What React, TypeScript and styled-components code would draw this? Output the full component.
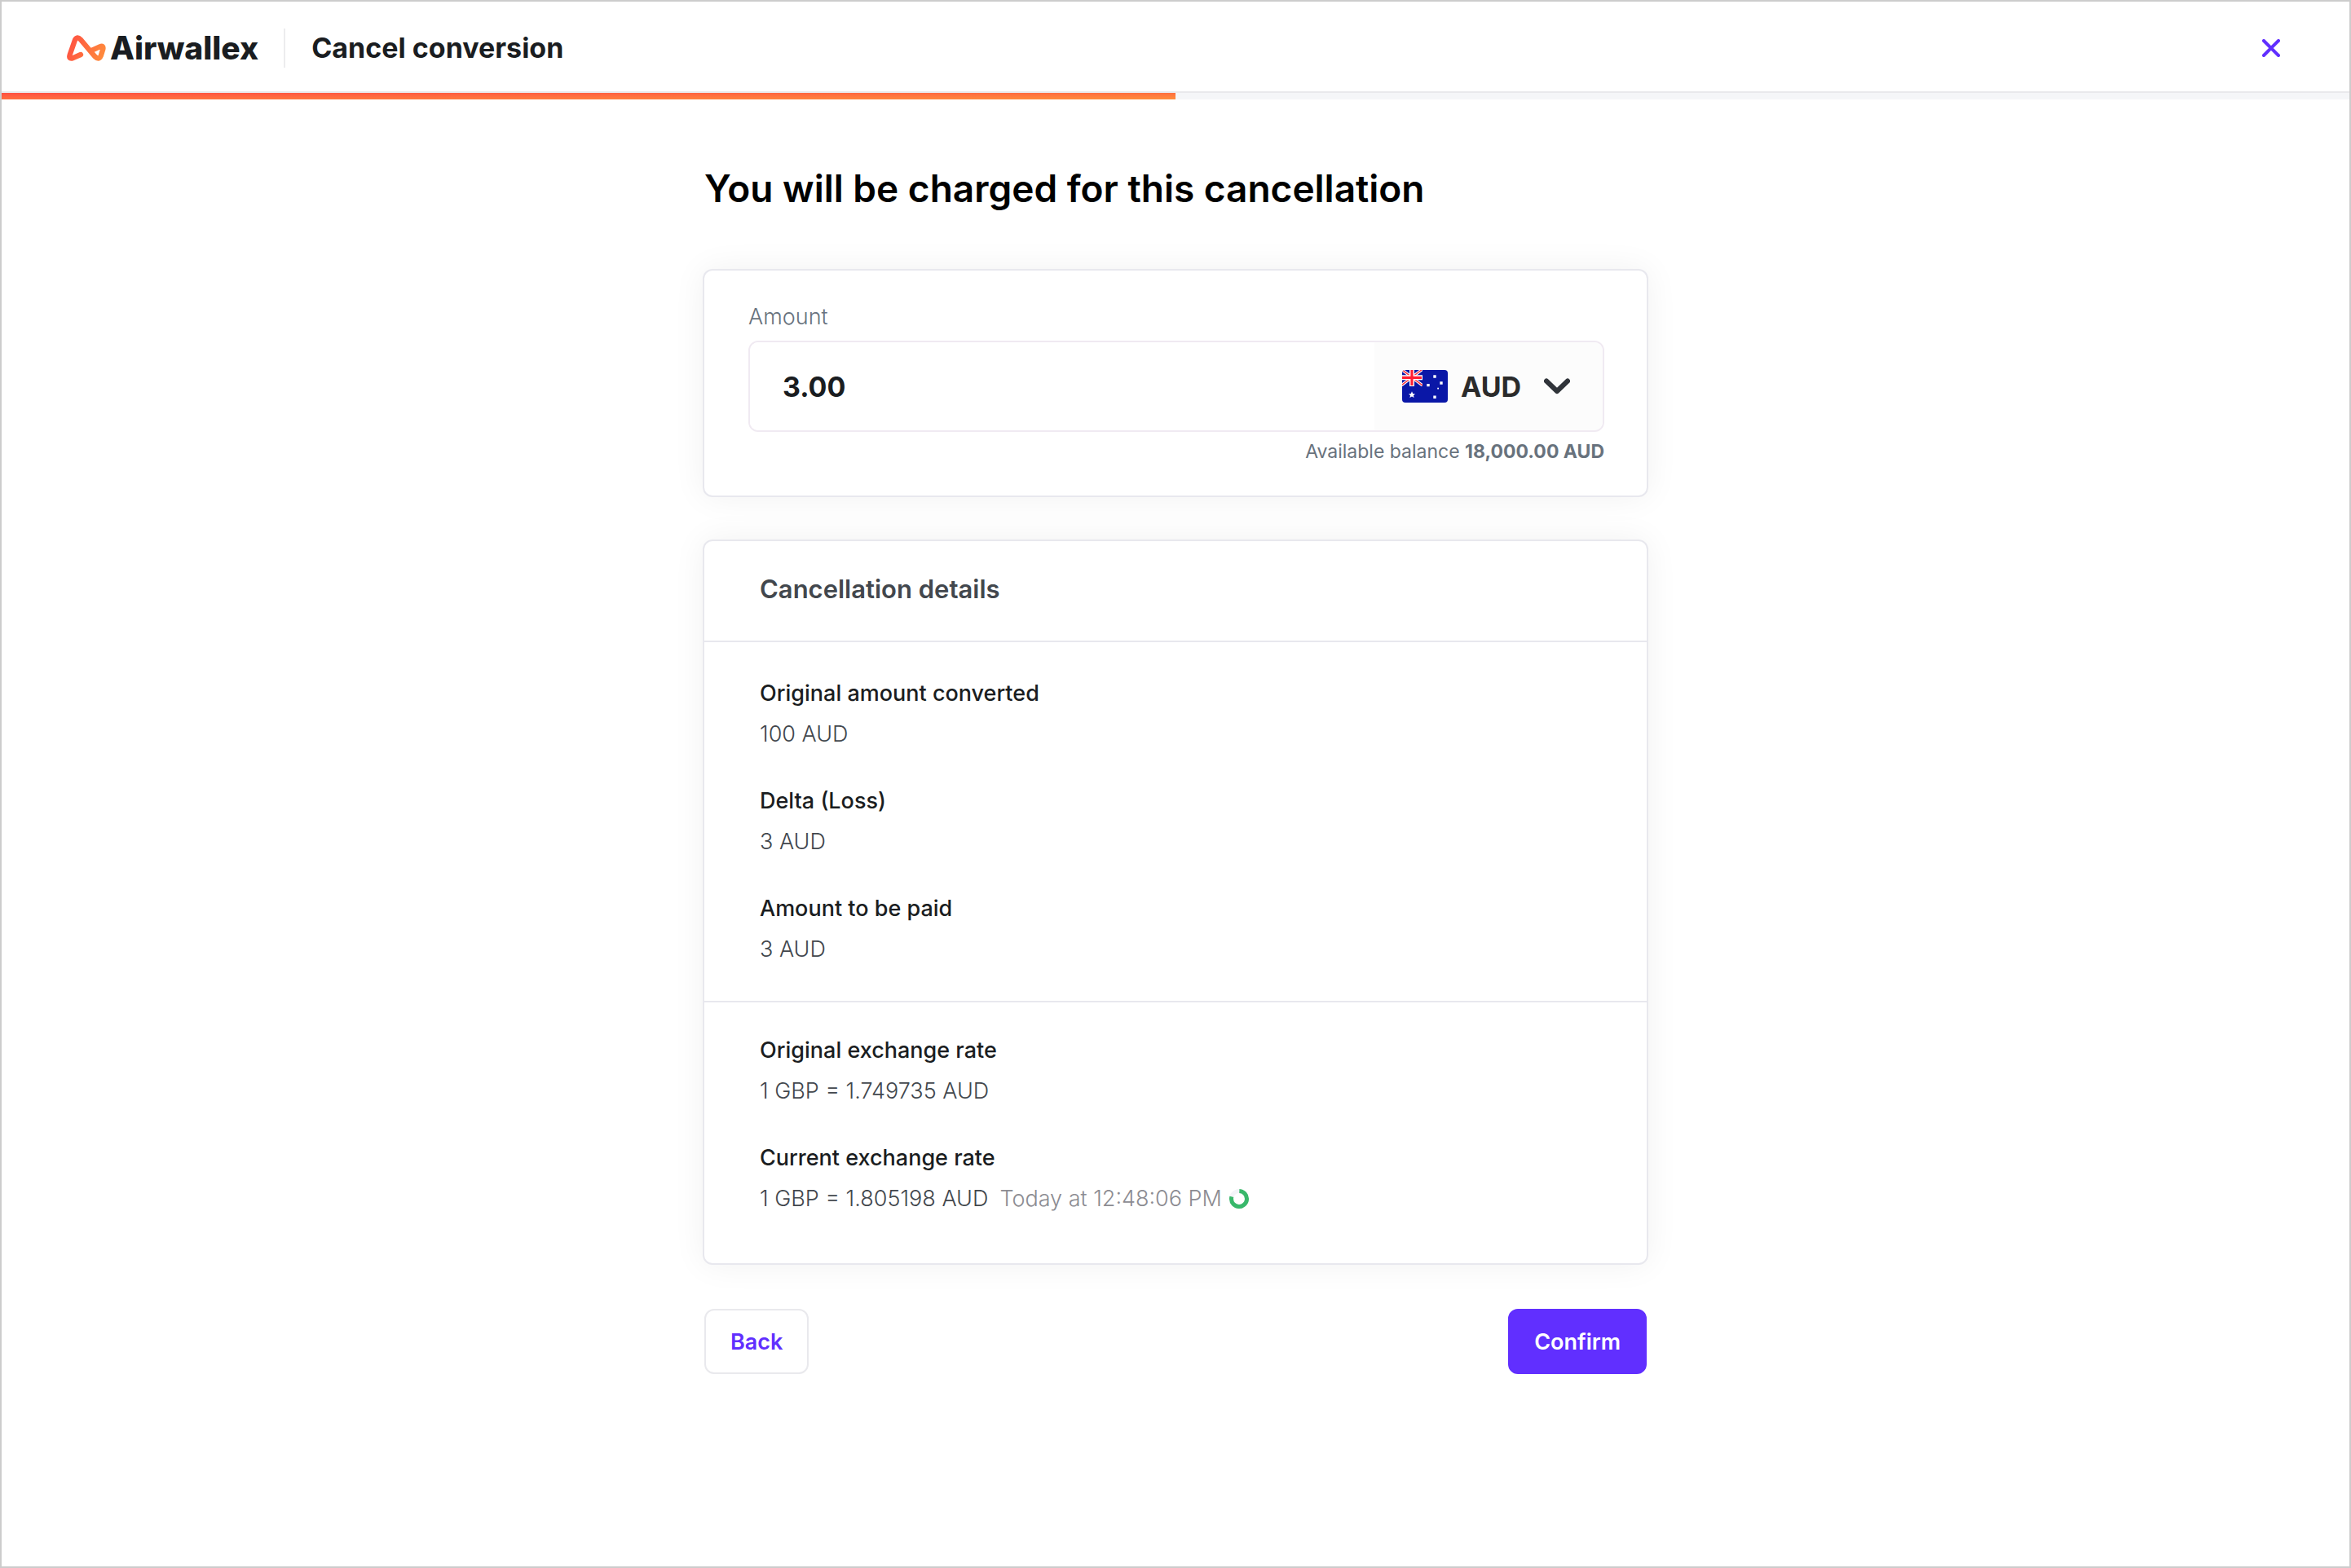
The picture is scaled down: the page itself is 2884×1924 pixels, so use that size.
import React, { useId, useState } from "react";
import styled, { createGlobalStyle } from "styled-components";

const color = {
  ink: "#1a1d21",
  slate: "#42474d",
  muted: "#68727d",
  faint: "#8c8c92",
  line: "#e8e8ee",
  fieldLine: "#f0eaf2",
  brand: "#612fff",
};

const GlobalStyle = createGlobalStyle`
  *, *::before, *::after { box-sizing: border-box; }
  body { margin: 0; background: #fff; }
  body, button, input, select {
    font-family: Inter, "Liberation Sans", sans-serif;
  }
`;

const Page = styled.div`
  display: flex;
  flex-direction: column;
  min-height: 100vh;
  border: 2px solid #ccc;
  background: #fff;
  color: ${color.ink};
`;

const Header = styled.header`
  display: flex;
  align-items: center;
  justify-content: space-between;
  height: 112px;
  padding: 3px 85px 0 80px;
  border-bottom: 2px solid #e9e9ec;
`;

const HeaderStart = styled.div`
  display: flex;
  align-items: center;
`;

const Brand = styled.a`
  display: flex;
  align-items: center;
  gap: 5px;
  color: ${color.ink};
  font-size: 39px;
  font-weight: 800;
  line-height: 40px;
  text-decoration: none;
`;

const HeaderTitle = styled.h1`
  margin: 0 0 0 31px;
  padding-left: 32px;
  border-left: 2px solid #ececee;
  font-size: 34px;
  font-weight: 700;
  line-height: 48px;
`;

const CloseButton = styled.button`
  display: flex;
  padding: 0;
  border: 0;
  background: none;
  color: ${color.brand};
  cursor: pointer;
`;

const Progress = styled.div`
  height: 8px;
  background: #f5f6f8;
`;

const ProgressFill = styled.div`
  width: 50%;
  height: 100%;
  background: linear-gradient(to bottom right, #ff4f42, #ff8e3c);
`;

const Main = styled.main`
  width: 100%;
  max-width: 1160px;
  margin: 0 auto;
  padding: 81px 0;
`;

const Heading = styled.h2`
  margin: 0 0 71px;
  padding-left: 2px;
  color: #000;
  font-size: 46px;
  font-weight: 600;
  line-height: 56px;
`;

const Card = styled.section`
  margin-bottom: 52px;
  border: 2px solid ${color.line};
  border-radius: 12px;
  background: #fff;
  box-shadow: 0 0 40px rgba(0, 0, 0, 0.06);
`;

const AmountForm = styled.div`
  display: flex;
  flex-direction: column;
  padding: 41px 52px 40px 54px;
`;

const FieldLabel = styled.label`
  margin-bottom: 13px;
  color: ${color.muted};
  font-size: 27px;
  font-weight: 300;
  line-height: 32px;
`;

const Field = styled.div`
  display: flex;
  height: 112px;
  overflow: hidden;
  border: 2px solid ${color.fieldLine};
  border-radius: 12px;
`;

const AmountInput = styled.input`
  flex: 1;
  min-width: 0;
  padding: 0 40px;
  border: 0;
  outline: 0;
  background: #fff;
  color: ${color.ink};
  font-size: 34px;
  font-weight: 700;
`;

const Currency = styled.div`
  display: flex;
  align-items: center;
  width: 280px;
  padding: 0 40px 0 34px;
  background: #fcfcfc;
`;

const CurrencySelect = styled.select`
  flex: 1;
  min-width: 0;
  height: 100%;
  margin-left: 16px;
  padding: 0;
  appearance: none;
  border: 0;
  outline: 0;
  background: none;
  color: #2b2b2b;
  font-size: 34px;
  font-weight: 700;
`;

const Balance = styled.p`
  margin: 10px 0 0;
  color: ${color.muted};
  font-size: 23px;
  font-weight: 400;
  line-height: 28px;
  text-align: right;

  strong { font-weight: 700; }
`;

const CardTitle = styled.h3`
  margin: 0;
  padding: 41px 68px 45px;
  color: ${color.slate};
  font-size: 31px;
  font-weight: 600;
  line-height: 36px;
`;

const DetailList = styled.dl<{ $last?: boolean }>`
  display: flex;
  flex-direction: column;
  gap: 50px;
  margin: 0;
  padding: ${(p) => (p.$last ? "43px 68px 63px" : "47px 68px 47px")};
  border-top: 2px solid ${color.line};
  font-size: 27px;
  line-height: 32px;
`;

const Term = styled.dt`
  margin-bottom: 18px;
  font-weight: 500;
`;

const Value = styled.dd`
  display: flex;
  align-items: center;
  margin: 0;
  color: ${color.slate};
  font-weight: 300;
`;

const Timestamp = styled.time`
  margin: 0 9px 0 14px;
  color: ${color.faint};
`;

const Actions = styled.div`
  display: flex;
  justify-content: space-between;
  padding: 2px;
`;

const Button = styled.button<{ $primary?: boolean }>`
  height: 80px;
  padding: 0 30px;
  border: 2px solid ${(p) => (p.$primary ? color.brand : "#e9e9ed")};
  border-radius: 12px;
  background: ${(p) => (p.$primary ? color.brand : "#fff")};
  color: ${(p) => (p.$primary ? "#fff" : color.brand)};
  font-size: 27px;
  font-weight: 600;
  cursor: pointer;
`;

const Mark = () => (
  <svg width="48" height="32" viewBox="0 0 144 96" fill="none" aria-hidden="true">
    <defs>
      <linearGradient id="mark" x1="0" y1="20" x2="144" y2="80" gradientUnits="userSpaceOnUse">
        <stop stopColor="#ff4f42" />
        <stop offset="1" stopColor="#ff8e3c" />
      </linearGradient>
    </defs>
    <path
      d="M51 72 L21 85 Q6 89 11 73 L30 18 Q38 3 50 16 L103 79 Q118 94 125 77 L133 52 Q136 37 121 43 L88 58"
      stroke="url(#mark)"
      strokeWidth="19"
      strokeLinecap="round"
      strokeLinejoin="round"
    />
  </svg>
);

const CloseIcon = () => (
  <svg width="22" height="22" viewBox="0 0 22 22" fill="none" aria-hidden="true">
    <path d="M2 2 L20 20 M20 2 L2 20" stroke="currentColor" strokeWidth="4" strokeLinecap="round" />
  </svg>
);

const Chevron = () => (
  <svg width="32" height="20" viewBox="0 0 32 20" fill="none" aria-hidden="true">
    <path
      d="M3 3.5 L16 16 L29 3.5"
      stroke="#30343a"
      strokeWidth="6"
      strokeLinecap="round"
      strokeLinejoin="round"
    />
  </svg>
);

const Flag = () => (
  <svg width="56" height="40" viewBox="0 0 56 40" role="img" aria-label="Australia">
    <defs>
      <clipPath id="flag"><rect width="56" height="40" rx="4" /></clipPath>
      <clipPath id="canton"><rect width="25" height="20" /></clipPath>
    </defs>
    <g clipPath="url(#flag)">
      <rect width="56" height="40" fill="#0a17a7" />
      <g clipPath="url(#canton)">
        <path d="M-1 -1 L25 19 M25 -1 L-1 19" stroke="#fff" strokeWidth="3.4" />
        <path d="M-1 -1 L25 19 M25 -1 L-1 19" stroke="#ff2e3b" strokeWidth="1.4" />
        <path d="M12 0 V20 M0 9.3 H25" stroke="#fff" strokeWidth="6" />
        <path d="M12 0 V19 M0 9.3 H24" stroke="#ff1e34" strokeWidth="3.2" />
      </g>
      <path
        fill="#fff"
        d="M12 26.3 L13.2 29.1 L16 29.4 L13.9 31.2 L14.6 34 L12 32.6 L9.4 34 L10.1 31.2 L8 29.4 L10.8 29.1 Z"
      />
      <path
        fill="#fff"
        d="M38.3 6.3h3.4v3.4h-3.4z M46.3 14.3h3.4v3.4h-3.4z M30.3 16.9h3.4v3.4h-3.4z M38.3 31.5h3.4v3.4h-3.4z M43.2 21.7h1.8v1.8h-1.8z"
      />
    </g>
  </svg>
);

const RefreshRing = () => (
  <svg width="24" height="24" viewBox="0 0 24 24" fill="none" aria-hidden="true">
    <circle cx="12" cy="12" r="9.5" stroke="#f3f4f8" strokeWidth="5" />
    <circle
      cx="12"
      cy="12"
      r="9.5"
      stroke="#39b86b"
      strokeWidth="5"
      pathLength="360"
      strokeDasharray="284 76"
      transform="rotate(-88 12 12)"
    />
  </svg>
);

type Detail = { term: string; value: string; time?: string };

const amounts: Detail[] = [
  { term: "Original amount converted", value: "100 AUD" },
  { term: "Delta (Loss)", value: "3 AUD" },
  { term: "Amount to be paid", value: "3 AUD" },
];

const rates: Detail[] = [
  { term: "Original exchange rate", value: "1 GBP = 1.749735 AUD" },
  { term: "Current exchange rate", value: "1 GBP = 1.805198 AUD", time: "Today at 12:48:06 PM" },
];

const Details = ({ items, last }: { items: Detail[]; last?: boolean }) => (
  <DetailList $last={last}>
    {items.map(({ term, value, time }) => (
      <div key={term}>
        <Term>{term}</Term>
        <Value>
          {value}
          {time && (
            <>
              <Timestamp>{time}</Timestamp>
              <RefreshRing />
            </>
          )}
        </Value>
      </div>
    ))}
  </DetailList>
);

export default function App() {
  const amountId = useId();
  const [amount, setAmount] = useState("3.00");

  return (
    <>
      <GlobalStyle />
      <Page>
        <Header>
          <HeaderStart>
            <Brand href="#">
              <Mark />
              Airwallex
            </Brand>
            <HeaderTitle>Cancel conversion</HeaderTitle>
          </HeaderStart>
          <CloseButton type="button" aria-label="Close">
            <CloseIcon />
          </CloseButton>
        </Header>
        <Progress role="progressbar" aria-valuenow={50} aria-label="Progress">
          <ProgressFill />
        </Progress>
        <Main>
          <Heading>You will be charged for this cancellation</Heading>
          <Card>
            <AmountForm>
              <FieldLabel htmlFor={amountId}>Amount</FieldLabel>
              <Field>
                <AmountInput
                  id={amountId}
                  inputMode="decimal"
                  value={amount}
                  onChange={(e) => setAmount(e.target.value)}
                />
                <Currency>
                  <Flag />
                  <CurrencySelect aria-label="Currency" defaultValue="AUD">
                    <option>AUD</option>
                  </CurrencySelect>
                  <Chevron />
                </Currency>
              </Field>
              <Balance>
                Available balance <strong>18,000.00 AUD</strong>
              </Balance>
            </AmountForm>
          </Card>
          <Card>
            <CardTitle>Cancellation details</CardTitle>
            <Details items={amounts} />
            <Details items={rates} last />
          </Card>
          <Actions>
            <Button type="button">Back</Button>
            <Button type="button" $primary>Confirm</Button>
          </Actions>
        </Main>
      </Page>
    </>
  );
}
